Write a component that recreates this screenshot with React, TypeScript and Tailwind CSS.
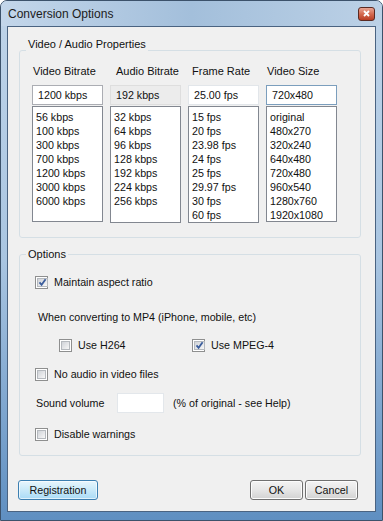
import React from 'react';

interface IColumn {
  title: string;
  titleClass: string;
  value: string;
  inputClass: string;
  listClass: string;
  items: string[];
}

const columns: IColumn[] = [
  {
    title: 'Video Bitrate',
    titleClass: 'pl-px',
    value: '1200 kbps',
    inputClass: 'bg-white border-[#abadb3]',
    listClass: 'h-[116px]',
    items: ['56 kbps', '100 kbps', '300 kbps', '700 kbps', '1200 kbps', '3000 kbps', '6000 kbps'],
  },
  {
    title: 'Audio Bitrate',
    titleClass: 'pl-[6px]',
    value: '192 kbps',
    inputClass: 'bg-[#ececec] border-[#dedede]',
    listClass: 'h-[117px] mt-px',
    items: ['32 kbps', '64 kbps', '96 kbps', '128 kbps', '192 kbps', '224 kbps', '256 kbps'],
  },
  {
    title: 'Frame Rate',
    titleClass: 'pl-[4px]',
    value: '25.00 fps',
    inputClass: 'bg-white border-[#e2e6ea]',
    listClass: 'h-[117px] mt-px',
    items: ['15 fps', '20 fps', '23.98 fps', '24 fps', '25 fps', '29.97 fps', '30 fps', '60 fps'],
  },
  {
    title: 'Video Size',
    titleClass: 'pl-px',
    value: '720x480',
    inputClass: 'bg-white border-[#7b9ebd]',
    listClass: 'h-[116px]',
    items: ['original', '480x270', '320x240', '640x480', '720x480', '960x540', '1280x760', '1920x1080'],
  },
];

const CheckBox = ({ checked }: { checked?: boolean }) => (
  <span className="w-[13px] h-[13px] shrink-0 border border-[#8e8f8f] bg-white p-px flex">
    <span className="flex-1 border border-[#b5b9be] bg-linear-to-br from-[#d0d3d8] to-[#f7f7f7] flex items-center justify-center">
      {checked && (
        <svg width="9" height="9" viewBox="0 0 9 9">
          <path d="M1.5 4.3 L3.6 6.8 L7.6 1.2" fill="none" stroke="#3b5d9c" strokeWidth="1.8" />
        </svg>
      )}
    </span>
  </span>
);

const Button = ({ label, primary, className }: { label: string; primary?: boolean; className: string }) => (
  <button
    className={
      primary
        ? `${className} h-[20px] rounded-[3px] border border-[#3c7fb1] bg-linear-to-b from-[#e8f6fd] via-[#c9e9f9] to-[#a9dbf6] shadow-[inset_0_0_0_1px_#ffffffa0] text-[#111]`
        : `${className} h-[20px] rounded-[3px] border border-[#707070] bg-linear-to-b from-[#f4f4f4] via-[#e6e6e6] to-[#d2d2d2] shadow-[inset_0_0_0_1px_#fcfcfc] text-[#111]`
    }
  >
    {label}
  </button>
);

const App = () => {
  return (
    <div className="w-[383px] h-[521px] font-['Liberation_Sans',Arial,sans-serif] text-[10.7px] text-[#111] leading-[13px]">
      <div className="w-full h-full flex flex-col rounded-t-[7px] border border-[#3c526b] bg-linear-to-b from-[#bfd4e9] via-[#a9c5e1] to-[#5f8fc1] overflow-hidden">
        {/* title bar */}
        <div className="h-[25px] shrink-0 flex items-center justify-between pl-[7px] pr-[7px] bg-linear-to-r from-[#c3d6ea] via-[#a3bfdb] to-[#bcd1e6]">
          <span className="text-[12px] text-[#1c1c1c] pt-px">Conversion Options</span>
          <span className="w-[17px] h-[14px] rounded-[3px] border border-[#5a2a22] bg-linear-to-b from-[#e8a493] via-[#d46a50] to-[#b93c22] flex items-center justify-center">
            <svg width="7" height="7" viewBox="0 0 7 7">
              <path d="M1 1 L6 6 M6 1 L1 6" stroke="#fff" strokeWidth="1.8" />
            </svg>
          </span>
        </div>

        {/* client area */}
        <div className="flex-1 mx-[6px] mb-[8px] border border-[#4a6381] bg-[#f0f0f0] flex flex-col">
          <fieldset className="mt-[11px] ml-[11px] mr-[14px] border border-[#d5dfe5] rounded-[3px] px-[6px] pb-[14px]">
            <legend className="px-[2px] pb-[12px] text-[11px]">Video / Audio Properties</legend>
            <div className="flex gap-[7px] pl-[6px] pt-[2px]">
              {columns.map((col) => (
                <div key={col.title} className="w-[71px] flex flex-col">
                  <div className={`${col.titleClass} h-[13px] text-[11px] whitespace-nowrap`}>{col.title}</div>
                  <div className={`${col.inputClass} mt-[7px] h-[20px] border flex items-center pl-[5px]`}>
                    {col.value}
                  </div>
                  <div className={`${col.listClass} mt-[1px] border border-[#828790] bg-white pl-[3px] pt-[3px] leading-[14px]`}>
                    {col.items.map((it) => (
                      <div key={it}>{it}</div>
                    ))}
                  </div>
                </div>
              ))}
            </div>
          </fieldset>

          <fieldset className="mt-[10px] ml-[11px] mr-[14px] border border-[#d5dfe5] rounded-[3px] px-[6px] pb-[14px]">
            <legend className="px-[2px] text-[11px]">Options</legend>
            <div className="mt-[14px] h-[14px] flex items-center pl-[9px]">
              <CheckBox checked />
              <span className="ml-[6px]">Maintain aspect ratio</span>
            </div>
            <div className="mt-[21px] h-[14px] flex items-center pl-[12px]">
              When converting to MP4 (iPhone, mobile, etc)
            </div>
            <div className="mt-[14px] h-[14px] flex items-center pl-[33px]">
              <div className="w-[133px] flex items-center">
                <CheckBox />
                <span className="ml-[6px]">Use H264</span>
              </div>
              <CheckBox checked />
              <span className="ml-[6px]">Use MPEG-4</span>
            </div>
            <div className="mt-[15px] h-[14px] flex items-center pl-[9px]">
              <CheckBox />
              <span className="ml-[6px]">No audio in video files</span>
            </div>
            <div className="mt-[12px] h-[20px] flex items-center pl-[10px]">
              <span className="w-[81px]">Sound volume</span>
              <span className="w-[47px] h-[20px] bg-white border border-[#e3e7eb]" />
              <span className="ml-[9px]">(% of original - see Help)</span>
            </div>
            <div className="mt-[14px] h-[14px] flex items-center pl-[9px]">
              <CheckBox />
              <span className="ml-[6px]">Disable warnings</span>
            </div>
          </fieldset>

          <div className="mt-auto mb-[11px] flex items-center pl-[10px] pr-[17px]">
            <Button label="Registration" primary className="w-[80px]" />
            <div className="ml-auto flex gap-[2px]">
              <Button label="OK" className="w-[53px]" />
              <Button label="Cancel" className="w-[53px]" />
            </div>
          </div>
        </div>
      </div>
    </div>
  );
};

export default App;
